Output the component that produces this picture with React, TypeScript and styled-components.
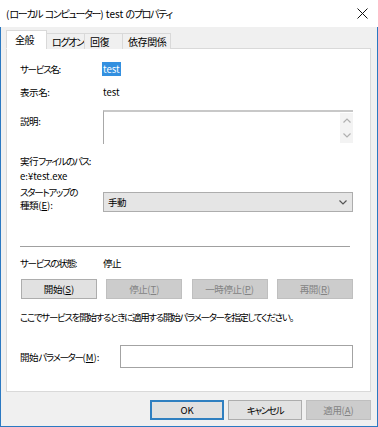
import styled, { createGlobalStyle } from 'styled-components';

const GlobalStyle = createGlobalStyle`
     html, body {
          margin: 0;
          padding: 0;
          background: #ffffff;
     }
     body {
          font-family: 'Noto Sans CJK JP', 'Noto Sans', sans-serif;
          font-size: 9.5px;
          font-feature-settings: 'palt' 1;
          letter-spacing: -1.3px;
          color: #000;
          white-space: nowrap;
     }
`;

const Window = styled.div`
     width: 378px;
     height: 427px;
     display: flex;
     flex-direction: column;
     box-sizing: border-box;
`;

const TitleBar = styled.div`
     height: 27px;
     flex-shrink: 0;
     background: #fff;
     display: flex;
     align-items: center;
     justify-content: space-between;
     padding: 0 10px 0 6px;
     font-size: 10px;
`;

const CloseIcon = () => (
     <svg width="11" height="11" viewBox="0 0 11 11">
          <path d="M0.5 0.5 L10.5 10.5 M10.5 0.5 L0.5 10.5" stroke="#111" strokeWidth="1" />
     </svg>
);

// latin runs keep their natural spacing, kanji runs only a little tighter
const Latin = styled.span`
     letter-spacing: 0;
`;

const K = styled.span`
     letter-spacing: -0.4px;
`;

const U = styled.span`
     text-decoration: underline;
`;

const Mn = ({ k }: { k: string }) => (
     <Latin>
          (<U>{k}</U>)
     </Latin>
);

const Body = styled.div`
     flex: 1;
     background: #f0f0f0;
     border: 1px solid #2b79c2;
     border-top: none;
     padding: 3px 6px 0 5px;
     display: flex;
     flex-direction: column;
`;

const TabRow = styled.div`
     display: flex;
     align-items: flex-end;
     height: 19px;
     position: relative;
     z-index: 1;
     font-size: 10px;
`;

const Tab = styled.div<{ $active?: boolean; $w: number }>`
     box-sizing: border-box;
     width: ${(p) => p.$w}px;
     height: ${(p) => (p.$active ? '19px' : '16px')};
     padding-left: ${(p) => (p.$active ? '8px' : '5px')};
     margin-left: ${(p) => (p.$active ? '0' : '-1px')};
     border: 1px solid #d9d9d9;
     border-bottom: ${(p) => (p.$active ? '1px solid #fff' : 'none')};
     background: ${(p) => (p.$active ? '#fff' : '#f0f0f0')};
     display: flex;
     align-items: center;
`;

const Panel = styled.div`
     height: 344px;
     box-sizing: border-box;
     margin-top: -1px;
     background: #fff;
     border: 1px solid #d9d9d9;
     padding: 12px 17px 0 13px;
     display: flex;
     flex-direction: column;
`;

const Row = styled.div<{ $mt?: number; $top?: boolean }>`
     display: flex;
     align-items: ${(p) => (p.$top ? 'flex-start' : 'center')};
     margin-top: ${(p) => p.$mt ?? 0}px;
     min-height: 16px;
`;

const Label = styled.div<{ $w?: number; $mt?: number }>`
     width: ${(p) => p.$w ?? 83}px;
     margin-top: ${(p) => p.$mt ?? 0}px;
     flex-shrink: 0;
`;

const Selected = styled.span`
     background: #3390e0;
     color: #fff;
     padding: 0 1px;
     margin-left: -1px;
     letter-spacing: 0;
`;

const TextArea = styled.div`
     flex: 1;
     height: 34px;
     box-sizing: border-box;
     border-top: 2px solid #c8c8c8;
     border-left: 1px solid #a8a8a8;
     display: flex;
     justify-content: flex-end;
`;

const ScrollBar = styled.div`
     width: 13px;
     margin-top: 1px;
     height: 30px;
     background: #f3f3f3;
     display: flex;
     flex-direction: column;
     align-items: center;
     justify-content: space-around;
`;

const Chevron = ({ up, color = '#b0b0b0' }: { up?: boolean; color?: string }) => (
     <svg width="8" height="5" viewBox="0 0 8 5">
          <path
               d={up ? 'M0.5 4.5 L4 1 L7.5 4.5' : 'M0.5 0.5 L4 4 L7.5 0.5'}
               stroke={color}
               strokeWidth="1.2"
               fill="none"
          />
     </svg>
);

const Select = styled.div`
     flex: 1;
     height: 20px;
     box-sizing: border-box;
     background: #e5e5e5;
     border: 1px solid #adadad;
     display: flex;
     align-items: center;
     justify-content: space-between;
     padding: 0 5px 0 4px;
`;

const StackLabel = styled.div`
     width: 83px;
     flex-shrink: 0;
     line-height: 13px;
     margin-top: -6px;
`;

const Separator = styled.div`
     height: 1px;
     background: #a0a0a0;
     margin-top: 34px;
     margin-right: 3px;
`;

const ButtonRow = styled.div<{ $mt?: number }>`
     display: flex;
     justify-content: space-between;
     padding-left: 1px;
     margin-top: ${(p) => p.$mt ?? 0}px;
`;

const Button = styled.div<{ $disabled?: boolean; $default?: boolean; $w?: number }>`
     width: ${(p) => p.$w ?? 76}px;
     height: 20px;
     box-sizing: border-box;
     display: flex;
     align-items: center;
     justify-content: center;
     background: ${(p) => (p.$disabled ? '#cccccc' : '#e1e1e1')};
     color: ${(p) => (p.$disabled ? '#838383' : '#000')};
     border: ${(p) =>
          p.$default ? '2px solid #2f7fc0' : p.$disabled ? '1px solid #bfbfbf' : '1px solid #adadad'};
`;

const Input = styled.div`
     flex: 1;
     height: 23px;
     box-sizing: border-box;
     border: 1px solid #a3a3a3;
     background: #fff;
`;

const Footer = styled.div`
     display: flex;
     justify-content: flex-end;
     gap: 4px;
     margin-top: 8px;
`;

export default function App() {
     return (
          <>
               <GlobalStyle />
               <Window>
                    <TitleBar>
                         <span>
                              <Latin>(</Latin>ローカル<Latin> </Latin>コンピューター
                              <Latin>) test </Latin>のプロパティ
                         </span>
                         <CloseIcon />
                    </TitleBar>
                    <Body>
                         <TabRow>
                              <Tab $active $w={41}>
                                   <K>全般</K>
                              </Tab>
                              <Tab $w={39}>ログオン</Tab>
                              <Tab $w={39}>
                                   <K>回復</K>
                              </Tab>
                              <Tab $w={49}>
                                   <K>依存関係</K>
                              </Tab>
                         </TabRow>
                         <Panel>
                              <Row>
                                   <Label>サービス名:</Label>
                                   <Selected>test</Selected>
                              </Row>
                              <Row $mt={7}>
                                   <Label>
                                        <K>表示名</K>:
                                   </Label>
                                   <Latin>test</Latin>
                              </Row>
                              <Row $mt={10} $top>
                                   <Label $mt={4}>
                                        <K>説明</K>:
                                   </Label>
                                   <TextArea>
                                        <ScrollBar>
                                             <Chevron up />
                                             <Chevron />
                                        </ScrollBar>
                                   </TextArea>
                              </Row>
                              <Row $mt={9}>
                                   <K>実行</K>ファイルのパス:
                              </Row>
                              <Row $mt={-1}>
                                   <Latin>e:¥test.exe</Latin>
                              </Row>
                              <Row $mt={8} $top>
                                   <StackLabel>
                                        スタートアップの
                                        <br />
                                        <K>種類</K>
                                        <Mn k="E" />:
                                   </StackLabel>
                                   <Select>
                                        <K>手動</K>
                                        <Chevron color="#555" />
                                   </Select>
                              </Row>
                              <Separator />
                              <Row $mt={8}>
                                   <Label>サービスの状態:</Label>
                                   <K>停止</K>
                              </Row>
                              <ButtonRow $mt={8}>
                                   <Button>
                                        <K>開始</K>
                                        <Mn k="S" />
                                   </Button>
                                   <Button $disabled>
                                        <K>停止</K>
                                        <Mn k="T" />
                                   </Button>
                                   <Button $disabled>
                                        <K>一時停止</K>
                                        <Mn k="P" />
                                   </Button>
                                   <Button $disabled>
                                        <K>再開</K>
                                        <Mn k="R" />
                                   </Button>
                              </ButtonRow>
                              <Row $mt={10}>
                                   ここでサービスを開始するときに適用する開始パラメーターを指定してください。
                              </Row>
                              <Row $mt={20}>
                                   <Label $w={100}>
                                        <K>開始</K>パラメーター<Mn k="M" />:
                                   </Label>
                                   <Input />
                              </Row>
                         </Panel>
                         <Footer>
                              <Button $default $w={74}>
                                   <Latin>OK</Latin>
                              </Button>
                              <Button $w={74}>キャンセル</Button>
                              <Button $disabled $w={65}>
                                   <K>適用</K>
                                   <Mn k="A" />
                              </Button>
                         </Footer>
                    </Body>
               </Window>
          </>
     );
}
